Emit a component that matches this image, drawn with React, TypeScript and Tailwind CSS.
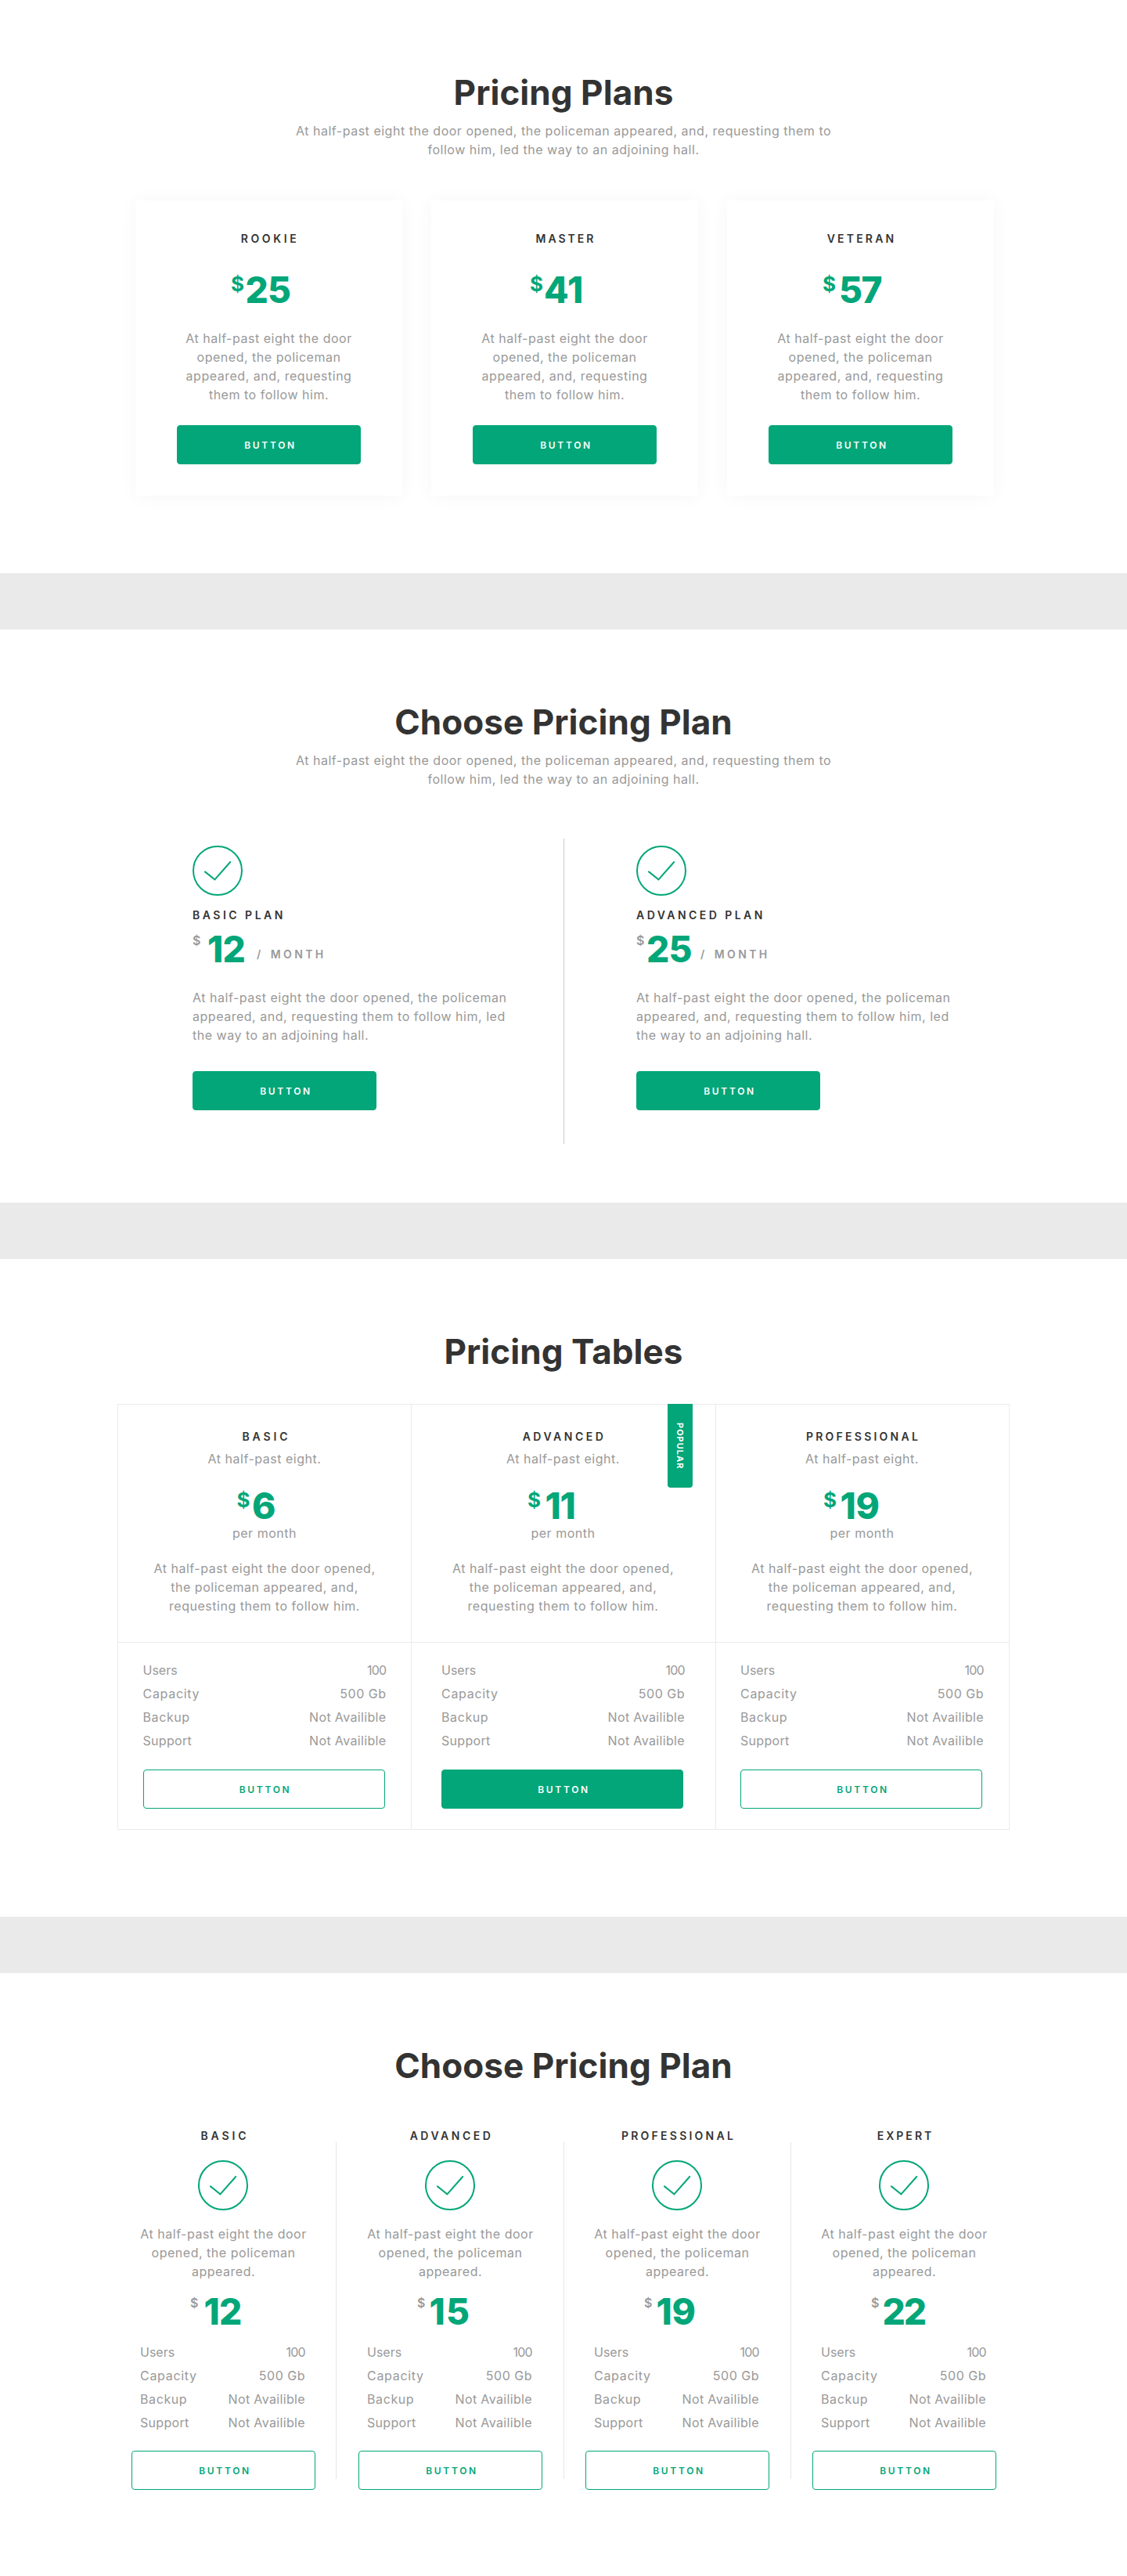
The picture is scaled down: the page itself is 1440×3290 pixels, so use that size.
import type { ReactNode } from 'react';
import clsx from 'clsx';

const FEATURES = [
  { name: 'Users', nameCls: 'tracking-normal', value: '100', valueCls: 'tracking-[-0.7px]' },
  { name: 'Capacity', nameCls: 'tracking-[0.7px]', value: '500 Gb', valueCls: 'tracking-[0.5px]' },
  { name: 'Backup', nameCls: 'tracking-[0.6px]', value: 'Not Availible', valueCls: 'tracking-[0.35px]' },
  { name: 'Support', nameCls: 'tracking-[0.3px]', value: 'Not Availible', valueCls: 'tracking-[0.35px]' },
];

function Title({ children }: { children: ReactNode }) {
  return (
    <h2 className="pt-[88px] text-center text-[44px] leading-[60px] font-bold tracking-[0.05px] text-[#333]">
      {children}
    </h2>
  );
}

/** Body copy, broken into fixed lines. */
function Copy({ lines, className }: { lines: string[]; className?: string }) {
  return (
    <p className={clsx('text-[16px] leading-6 tracking-[0.52px] whitespace-nowrap text-[#999]', className)}>
      {lines.map((line) => (
        <span key={line} className="block">
          {line}
        </span>
      ))}
    </p>
  );
}

function Intro() {
  return (
    <Copy
      className="mt-[7px] text-center"
      lines={[
        'At half-past eight the door opened, the policeman appeared, and, requesting them to',
        'follow him, led the way to an adjoining hall.',
      ]}
    />
  );
}

function Label({ children, className }: { children: ReactNode; className?: string }) {
  return (
    <h3 className={clsx('text-[14px] leading-[21px] font-semibold whitespace-nowrap text-[#333]', className)}>
      {children}
    </h3>
  );
}

function Button({ className, outline }: { className?: string; outline?: boolean }) {
  return (
    <button
      className={clsx(
        'block h-[50px] rounded-[4px] border border-[#03a678] pl-1 text-center text-[12px] leading-[49px] font-semibold tracking-[2.7px]',
        outline ? 'bg-white text-[#03a678]' : 'bg-[#03a678] text-white',
        className,
      )}
    >
      BUTTON
    </button>
  );
}

function Check({ className }: { className?: string }) {
  return (
    <svg
      className={clsx('block size-16', className)}
      viewBox="0 0 64 64"
      fill="none"
      stroke="#03a678"
      strokeWidth="2"
      strokeLinecap="round"
      strokeLinejoin="miter"
    >
      <circle cx="32" cy="32" r="31" />
      <path d="M16 33.4 28.4 43.4 48.2 21" />
    </svg>
  );
}

/** Price with a large green currency sign. */
function GreenPrice({ value, className, digits }: { value: string; className?: string; digits: string }) {
  return (
    <div className={clsx('flex h-[57px] items-start font-bold text-[#03a678]', className)}>
      <span className="mt-[6px] w-[17px] text-[26px] leading-[31px]">$</span>
      <span className={clsx('text-[46px] leading-[58px] font-extrabold', digits)}>{value}</span>
    </div>
  );
}

/** Price with a small grey currency sign. */
function GreyPrice({
  value,
  className,
  digits,
  children,
}: {
  value: string;
  className?: string;
  digits: string;
  children?: ReactNode;
}) {
  return (
    <div className={clsx('flex h-[57px] items-start', className)}>
      <span className="mt-2 w-[10.5px] text-[16px] leading-5 font-semibold text-[#999]">$</span>
      <span className={clsx('text-[46px] leading-[58px] font-extrabold text-[#03a678]', digits)}>{value}</span>
      {children}
    </div>
  );
}

function FeatureList({ className, row }: { className?: string; row: string }) {
  return (
    <ul className={clsx('text-[16px] text-[#999]', className)}>
      {FEATURES.map((f) => (
        <li key={f.name} className={clsx('flex justify-between leading-[30px] whitespace-nowrap', row)}>
          <span className={f.nameCls}>{f.name}</span>
          <span className={f.valueCls}>{f.value}</span>
        </li>
      ))}
    </ul>
  );
}

const CARDS = [
  { name: 'ROOKIE', label: 'tracking-[3.6px] pl-[3px]', value: '25', price: 'pl-[122px]', digits: 'ml-[1.5px] tracking-[-0.8px]' },
  { name: 'MASTER', label: 'tracking-[3px] pl-[3px]', value: '41', price: 'pl-[126px]', digits: 'ml-px tracking-[0.3px]' },
  { name: 'VETERAN', label: 'tracking-[3.2px] pl-[3px]', value: '57', price: 'pl-[122px]', digits: 'ml-[4px] tracking-[-1.6px]' },
];

function PlansSection() {
  return (
    <section className="h-[732px] bg-white">
      <Title>Pricing Plans</Title>
      <Intro />
      <div className="mt-[53px] ml-[173px] flex gap-[37px]">
        {CARDS.map((c) => (
          <article key={c.name} className="h-[377px] w-[341px] bg-white pt-[38px] shadow-[0_1px_24px_rgba(0,0,0,0.04)]">
            <Label className={clsx('text-center', c.label)}>{c.name}</Label>
            <GreenPrice value={c.value} className={clsx('mt-[26px]', c.price)} digits={c.digits} />
            <Copy
              className="mt-[22px] text-center"
              lines={['At half-past eight the door', 'opened, the policeman', 'appeared, and, requesting', 'them to follow him.']}
            />
            <Button className="mx-auto mt-[27px] w-[235px]" />
          </article>
        ))}
      </div>
    </section>
  );
}

const HALVES = [
  {
    name: 'BASIC PLAN',
    label: 'tracking-[3.5px]',
    value: '12',
    column: 'w-[474px]',
    digits: 'ml-[8.5px] w-[47.5px] tracking-[-0.8px]',
    slash: 'ml-[15.5px]',
  },
  {
    name: 'ADVANCED PLAN',
    label: 'tracking-[3.45px]',
    value: '25',
    column: 'ml-[92px]',
    digits: 'ml-[2.5px] w-[58.5px] tracking-[-0.8px]',
    slash: 'ml-[10.5px]',
  },
];

function ChooseSection() {
  return (
    <section className="h-[732px] bg-white">
      <Title>Choose Pricing Plan</Title>
      <Intro />
      <div className="mt-16 ml-[246px] flex h-[390px]">
        {HALVES.map((h, i) => (
          <div key={h.name} className="flex">
            {i > 0 && <div className="w-px bg-[#ccc]" />}
            <article className={clsx('pt-[9px]', h.column)}>
              <Check />
              <Label className={clsx('mt-[14px]', h.label)}>{h.name}</Label>
              <GreyPrice value={h.value} className="mt-1" digits={h.digits}>
                <span
                  className={clsx(
                    'mt-[25px] flex gap-[12.5px] text-[14px] leading-[21px] font-semibold text-[#999]',
                    h.slash,
                  )}
                >
                  <span>/</span>
                  <span className="tracking-[3.35px]">MONTH</span>
                </span>
              </GreyPrice>
              <Copy
                className="mt-[22px]"
                lines={[
                  'At half-past eight the door opened, the policeman',
                  'appeared, and, requesting them to follow him, led',
                  'the way to an adjoining hall.',
                ]}
              />
              <Button className="mt-[34px] w-[235px]" />
            </article>
          </div>
        ))}
      </div>
    </section>
  );
}

const TABLE = [
  { name: 'BASIC', label: 'tracking-[3.9px] pl-[5px]', value: '6', price: 'pl-[120px]', digits: 'ml-[2.5px]' },
  { name: 'ADVANCED', label: 'tracking-[3.5px] pl-[3px]', value: '11', price: 'pl-[110px]', digits: 'ml-[5.5px] tracking-[-1.4px]', popular: true },
  { name: 'PROFESSIONAL', label: 'tracking-[3.25px] pl-[3px]', value: '19', price: 'pl-[106px]', digits: 'ml-[4.5px] tracking-[-0.2px]' },
];

function TablesSection() {
  return (
    <section className="h-[840px] bg-white">
      <Title>Pricing Tables</Title>
      <div className="mx-auto mt-[37px] grid h-[544px] w-[1140px] grid-cols-[375px_389px_1fr] border border-[#ebebeb]">
        {TABLE.map((t, i) => (
          <article key={t.name} className={clsx('relative', i < 2 && 'border-r border-[#ebebeb]')}>
            <div className={clsx('h-[304px] border-b border-[#ebebeb] pt-[30px]', i > 0 && 'pr-px')}>
              <div className="mx-auto w-[311px]">
                <Label className={clsx('text-center', t.label)}>{t.name}</Label>
                <Copy className="mt-[6px] text-center" lines={['At half-past eight.']} />
                <GreenPrice value={t.value} className={clsx('mt-[19px]', t.price)} digits={t.digits} />
                <Copy className="-mt-[5px] text-center" lines={['per month']} />
                <Copy
                  className="mt-[21px] text-center"
                  lines={['At half-past eight the door opened,', 'the policeman appeared, and,', 'requesting them to follow him.']}
                />
              </div>
            </div>
            <div className={clsx('pt-5', i > 0 && 'pr-px')}>
              <div className="mx-auto w-[311px]">
                <FeatureList row="" />
                <Button outline={!t.popular} className="mt-[22px] w-[309px]" />
              </div>
            </div>
            {t.popular && (
              <span className="absolute -top-px right-[29px] flex h-[107px] w-8 items-center justify-center rounded-b-[4px] bg-[#03a678] text-[11px] font-bold tracking-[1px] text-white [writing-mode:vertical-rl]">
                POPULAR
              </span>
            )}
          </article>
        ))}
      </div>
    </section>
  );
}

const QUARTERS = [
  { name: 'BASIC', divider: '', label: 'tracking-[3.9px] pl-1', value: '12', digits: 'ml-[7px] tracking-[-0.8px]' },
  { name: 'ADVANCED', divider: 'ml-[26px] mr-7', label: 'tracking-[3.5px] pl-[3px]', value: '15', digits: 'ml-[5px] tracking-[1.3px]' },
  { name: 'PROFESSIONAL', divider: 'ml-[27px] mr-[27px]', label: 'tracking-[3.25px] pl-[3px]', value: '19', digits: 'ml-[5px] tracking-[-0.2px]' },
  { name: 'EXPERT', divider: 'ml-[27px] mr-[27px]', label: 'tracking-[3.05px] pl-[3px]', value: '22', digits: 'ml-[4px] tracking-[-2px]' },
];

function CompareSection() {
  return (
    <section className="h-[770px] bg-white">
      <Title>Choose Pricing Plan</Title>
      <div className="mt-[49px] ml-[168px] flex">
        {QUARTERS.map((q, i) => (
          <div key={q.name} className="flex">
            {i > 0 && <div className={clsx('mt-[19px] h-[430px] w-px bg-[#e5e5e5]', q.divider)} />}
            <article className="w-[235px]">
              <Label className={clsx('text-center', q.label)}>{q.name}</Label>
              <Check className="mt-[21px] ml-[85px]" />
              <Copy
                className="mt-[18px] text-center"
                lines={['At half-past eight the door', 'opened, the policeman', 'appeared.']}
              />
              <GreyPrice value={q.value} className="mt-[10px] pl-[75px]" digits={q.digits} />
              <FeatureList className="mt-[9px]" row="pl-[11px] pr-[13px]" />
              <Button outline className="mt-[21px] w-[235px]" />
            </article>
          </div>
        ))}
      </div>
    </section>
  );
}

export default function App() {
  return (
    <main className="flex w-[1440px] flex-col gap-[72px] bg-[#eaeaea] font-['Inter',sans-serif]">
      <PlansSection />
      <ChooseSection />
      <TablesSection />
      <CompareSection />
    </main>
  );
}
